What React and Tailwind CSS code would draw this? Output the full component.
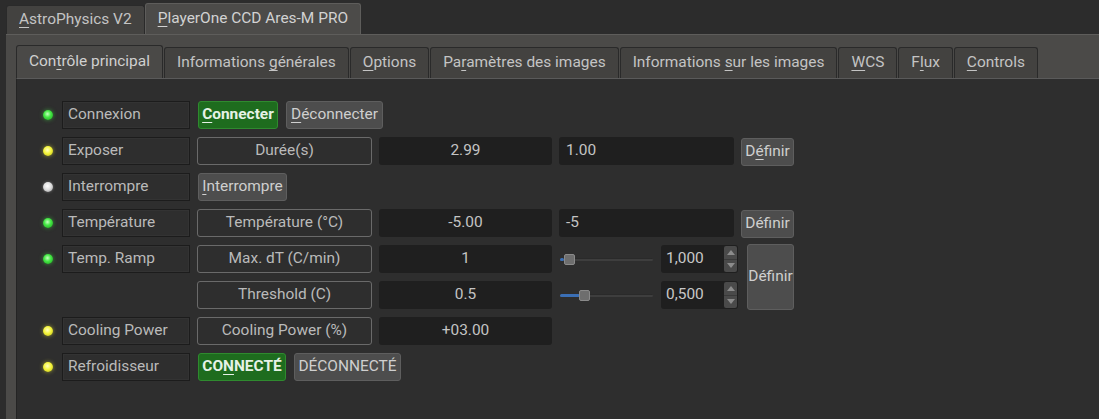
import React from "react";

const U = ({ children }) => <span className="underline underline-offset-[3px] decoration-1">{children}</span>;

function OuterTab({ active, children }) {
  return (
    <div
      className={
        "flex items-center px-[12px] border border-b-0 rounded-t-[3px] text-[15.45px] " +
        (active
          ? "h-[31px] bg-[#4c4b49] border-[#5e5d5b] text-[#d2d2d2]"
          : "h-[29px] bg-[#434240] border-[#2a2a2a] text-[#c4c4c4]")
      }
    >
      {children}
    </div>
  );
}

function InnerTab({ active, children }) {
  return (
    <div
      className={
        "flex items-center px-[12px] border border-b-0 rounded-t-[3px] text-[15.45px] " +
        (active
          ? "h-[33px] bg-[#4a4947] border-[#2a2a2a] text-[#d0d0d0]"
          : "h-[31px] bg-[#434240] border-[#2a2a2a] text-[#c4c4c4]")
      }
    >
      {children}
    </div>
  );
}

function Led({ color }) {
  const cls = {
    green:
      "bg-[radial-gradient(circle_at_45%_40%,#c8ffc0_0%,#45e845_40%,#1a9e1a_100%)] shadow-[0_0_4px_rgba(70,230,70,0.55)]",
    yellow:
      "bg-[radial-gradient(circle_at_45%_40%,#ffffc0_0%,#f4f43a_45%,#b4b418_100%)] shadow-[0_0_4px_rgba(240,240,60,0.55)]",
    white:
      "bg-[radial-gradient(circle_at_45%_40%,#ffffff_0%,#dedede_45%,#8a8a8a_100%)] shadow-[0_0_3px_rgba(220,220,220,0.4)]",
  }[color];
  return (
    <div className="flex items-center justify-end pr-[2px]">
      <div className={"w-[10px] h-[10px] rounded-full " + cls} />
    </div>
  );
}

function Label({ children }) {
  return (
    <div className="flex items-center pl-[5px] border border-[#1c1c1c] bg-[#2e2e2e] text-[15.45px] text-[#bababa] shadow-[inset_0_0_0_1px_#333]">
      {children}
    </div>
  );
}

function FieldLabel({ children }) {
  return (
    <div className="flex items-center justify-center border border-[#6a6a6a] rounded-[3px] text-[15.45px] text-[#bababa]">
      {children}
    </div>
  );
}

function Value({ children, left }) {
  return (
    <div
      className={
        "flex items-center bg-[#1f1f1f] rounded-[3px] text-[15.45px] text-[#c4c4c4] " +
        (left ? "pl-[7px]" : "justify-center")
      }
    >
      {children}
    </div>
  );
}

function Btn({ children, w, green, className = "" }) {
  return (
    <div
      className={
        "flex items-center justify-center h-[28px] rounded-[3px] border text-[15.45px] " +
        w +
        " " +
        (green
          ? "bg-[#1e6c1e] border-[#2f8a2f] text-[#e6f2e6] font-bold"
          : "bg-[#4d4d4d] border-[#5e5e5e] text-[#cfcfcf]") +
        " " +
        className
      }
    >
      {children}
    </div>
  );
}

function Slider({ pos, fill }) {
  return (
    <div className="relative flex items-center h-full pl-[1px]">
      <div className="w-full h-[3px] bg-[#3e3e3e] border-t border-[#2a2a2a] rounded-full" />
      <div
        className="absolute left-[1px] h-[3px] bg-[#3b6fb5] rounded-full"
        style={{ width: fill }}
      />
      <div
        className="absolute w-[11px] h-[11px] rounded-[2px] bg-[#6e6e6e] border border-[#8a8a8a]"
        style={{ left: pos }}
      />
    </div>
  );
}

function Spin({ children }) {
  return (
    <div className="flex bg-[#1f1f1f] rounded-[3px] overflow-hidden">
      <div className="flex-1 flex items-center pl-[5px] text-[15.45px] text-[#c8c8c8]">{children}</div>
      <div className="w-[13px] flex flex-col bg-[#4a4a4a] rounded-[2px] my-[1px] mr-[1px]">
        <div className="flex-1 flex items-center justify-center border-b border-[#3a3a3a]">
          <svg width="8" height="5" viewBox="0 0 8 5"><path d="M0 5 L4 0 L8 5 Z" fill="#8c8c8c" /></svg>
        </div>
        <div className="flex-1 flex items-center justify-center">
          <svg width="8" height="5" viewBox="0 0 8 5"><path d="M0 0 L4 5 L8 0 Z" fill="#8c8c8c" /></svg>
        </div>
      </div>
    </div>
  );
}

export default function App() {
  return (
    <div className="w-[1099px] h-[419px] overflow-hidden bg-[#2c2c2c] font-['Roboto','Liberation_Sans',sans-serif] font-normal flex flex-col">
      {/* outer tabs */}
      <div className="flex items-end h-[34px] pl-[6px] shrink-0">
        <OuterTab>
          <span><U>A</U>stroPhysics V2</span>
        </OuterTab>
        <OuterTab active>
          <span><U>P</U>layerOne CCD Ares-M PRO</span>
        </OuterTab>
      </div>
      {/* outer pane */}
      <div className="flex-1 ml-[6px] bg-[#4b4a48] border-t border-[#5e5d5b] pl-[10px] pt-[10px] flex flex-col">
        <div className="flex items-end h-[33px] gap-[1px] shrink-0">
          <InnerTab active>
            <span>Con<U>t</U>rôle principal</span>
          </InnerTab>
          <InnerTab>
            <span>Informations <U>g</U>énérales</span>
          </InnerTab>
          <InnerTab>
            <span><U>O</U>ptions</span>
          </InnerTab>
          <InnerTab>
            <span>Pa<U>r</U>amètres des images</span>
          </InnerTab>
          <InnerTab>
            <span>Informations <U>s</U>ur les images</span>
          </InnerTab>
          <InnerTab>
            <span><U>W</U>CS</span>
          </InnerTab>
          <InnerTab>
            <span>F<U>l</U>ux</span>
          </InnerTab>
          <InnerTab>
            <span><U>C</U>ontrols</span>
          </InnerTab>
        </div>
        {/* inner pane */}
        <div className="flex-1 bg-[#2e2e2e] border-t border-l border-t-[#5a5a5a] border-l-[#242424] pl-[12px] pt-[22px]">
          <div className="grid grid-cols-[26px_128px_175px_173px_175px_53px] auto-rows-[28px] gap-x-[7px] gap-y-[8px]">
            {/* Row 1 */}
            <Led color="green" />
            <Label>Connexion</Label>
            <div className="col-span-3 flex gap-[8px] pl-[1px]">
              <Btn green w="w-[80px]"><span><U>C</U>onnecter</span></Btn>
              <Btn w="w-[97px]"><span><U>D</U>éconnecter</span></Btn>
            </div>
            <div />

            {/* Row 2 */}
            <Led color="yellow" />
            <Label>Exposer</Label>
            <FieldLabel>Durée(s)</FieldLabel>
            <Value>2.99</Value>
            <Value left>1.00</Value>
            <Btn w="w-[53px]" className="mt-[1px] h-[27px]"><span>D<U>é</U>finir</span></Btn>

            {/* Row 3 */}
            <Led color="white" />
            <Label>Interrompre</Label>
            <div className="col-span-4 flex pl-[1px]">
              <Btn w="w-[89px]"><span><U>I</U>nterrompre</span></Btn>
            </div>

            {/* Row 4 */}
            <Led color="green" />
            <Label>Température</Label>
            <FieldLabel>Température (°C)</FieldLabel>
            <Value>-5.00</Value>
            <Value left>-5</Value>
            <Btn w="w-[53px]" className="mt-[1px] h-[27px]">Définir</Btn>

            {/* Row 5 & 6 */}
            <Led color="green" />
            <Label>Temp. Ramp</Label>
            <FieldLabel>Max. dT (C/min)</FieldLabel>
            <Value>1</Value>
            <div className="col-span-2 row-span-2 grid grid-cols-[94px_77px_48px] grid-rows-[28px_28px] gap-y-[8px] gap-x-[8px]">
              <Slider pos="5px" fill="4px" />
              <Spin>1,000</Spin>
              <div className="row-span-2 -my-[1px] flex items-center justify-center rounded-[3px] border border-[#5e5e5e] bg-[#4d4d4d] text-[15.45px] text-[#cfcfcf] ml-[1px]">
                Définir
              </div>
              <Slider pos="20px" fill="20px" />
              <Spin>0,500</Spin>
            </div>

            <div />
            <div />
            <FieldLabel>Threshold (C)</FieldLabel>
            <Value>0.5</Value>

            {/* Row 7 */}
            <Led color="yellow" />
            <Label>Cooling Power</Label>
            <FieldLabel>Cooling Power (%)</FieldLabel>
            <Value>+03.00</Value>
            <div className="col-span-2" />

            {/* Row 8 */}
            <Led color="yellow" />
            <Label>Refroidisseur</Label>
            <div className="col-span-4 flex gap-[8px] pl-[1px]">
              <Btn green w="w-[88px]"><span>CO<U>N</U>NECTÉ</span></Btn>
              <Btn w="w-[107px]">DÉCONNECTÉ</Btn>
            </div>
          </div>
        </div>
      </div>
    </div>
  );
}
